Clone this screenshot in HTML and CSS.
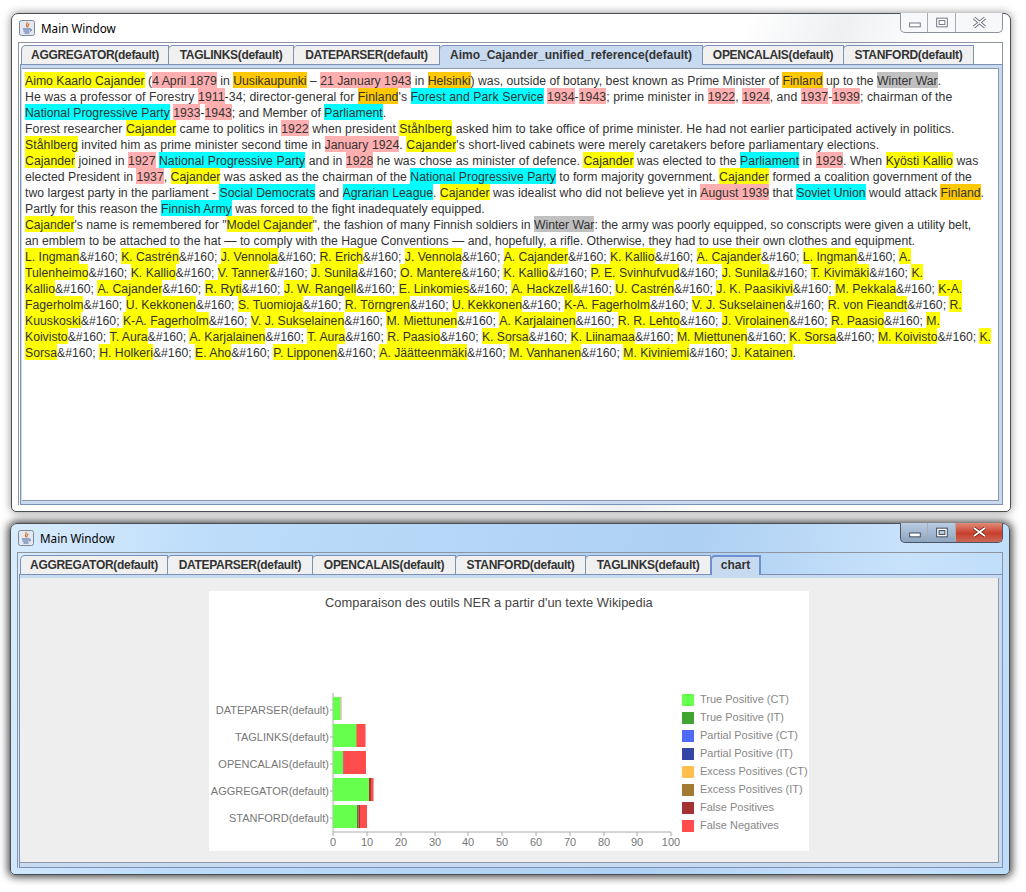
FILE: index.html
```html
<!DOCTYPE html>
<html lang="en">
<head>
<meta charset="utf-8">
<title>Main Window</title>
<link rel="stylesheet" href="styles.css">
</head>
<body>
<section class="win win-top">
  <header class="titlebar">
    <svg class="appicon" viewBox="0 0 16 16"><rect x=".5" y=".5" width="15" height="15" rx="2" fill="#e3e9f2" stroke="#7f8794"/><path d="M8 2c1 2-2 3 0 5M10 3.500c0 2-2 2-1 4" fill="none" stroke="#d8702a" stroke-width="1.200"/><path d="M4 9h7M4.500 11h6M5.500 13h5M11 9c2 0 2 2 0 2" fill="none" stroke="#46629a"/></svg>
    <span class="wintitle">Main Window</span>
    <div class="controls">
      <span class="ctl ctl-min"><svg viewBox="0 0 27 19"><rect x="9" y="10" width="11" height="4" fill="#fff" stroke="#6d7480"/></svg></span>
      <span class="ctl ctl-max"><svg viewBox="0 0 28 19"><rect x="9" y="5" width="11" height="9" fill="#fff" stroke="#6d7480"/><rect x="11.500" y="7.500" width="6" height="4" fill="none" stroke="#6d7480"/></svg></span>
      <span class="ctl ctl-close"><svg viewBox="0 0 46 19"><path d="M18 5l11 9M29 5l-11 9" stroke="#6d7480" stroke-width="3.400"/><path d="M18 5l11 9M29 5l-11 9" stroke="#fff" stroke-width="1.600"/></svg></span>
    </div>
  </header>
  <div class="tabpane">
    <nav class="tabs">
      <span class="tab caps w147">AGGREGATOR(default)</span>
      <span class="tab caps w125">TAGLINKS(default)</span>
      <span class="tab caps w146">DATEPARSER(default)</span>
      <span class="tab w263 active">Aimo_Cajander_unified_reference(default)</span>
      <span class="tab caps w141">OPENCALAIS(default)</span>
      <span class="tab caps w130">STANFORD(default)</span>
    </nav>
    <div class="tabbody-text">
      <div class="doc">
        <p class="ln"><i class="y">Aimo Kaarlo Cajander</i> (<i class="p">4 April 1879</i> in <i class="o">Uusikaupunki</i> – <i class="p">21 January 1943</i> in <i class="o">Helsinki</i>) was, outside of botany, best known as Prime Minister of <i class="o">Finland</i> up to the <i class="g">Winter War</i>.</p>
        <p class="ln wide3">He was a professor of Forestry <i class="p">1911</i>-34; director-general for <i class="o">Finland</i>'s <i class="c">Forest and Park Service</i> <i class="p">1934</i>-<i class="p">1943</i>; prime minister in <i class="p">1922</i>, <i class="p">1924</i>, and <i class="p">1937</i>-<i class="p">1939</i>; chairman of the</p>
        <p class="ln"><i class="c">National Progressive Party</i> <i class="p">1933</i>-<i class="p">1943</i>; and Member of <i class="c">Parliament</i>.</p>
        <p class="ln wide2">Forest researcher <i class="y">Cajander</i> came to politics in <i class="p">1922</i> when president <i class="y">Ståhlberg</i> asked him to take office of prime minister. He had not earlier participated actively in politics.</p>
        <p class="ln wide2"><i class="y">Ståhlberg</i> invited him as prime minister second time in <i class="p">January 1924</i>. <i class="y">Cajander</i>'s short-lived cabinets were merely caretakers before parliamentary elections.</p>
        <p class="ln wide2"><i class="y">Cajander</i> joined in <i class="p">1927</i> <i class="c">National Progressive Party</i> and in <i class="p">1928</i> he was chose as minister of defence. <i class="y">Cajander</i> was elected to the <i class="c">Parliament</i> in <i class="p">1929</i>. When <i class="y">Kyösti Kallio</i> was</p>
        <p class="ln wide1">elected President in <i class="p">1937</i>, <i class="y">Cajander</i> was asked as the chairman of the <i class="c">National Progressive Party</i> to form majority government. <i class="y">Cajander</i> formed a coalition government of the</p>
        <p class="ln">two largest party in the parliament - <i class="c">Social Democrats</i> and <i class="c">Agrarian League</i>. <i class="y">Cajander</i> was idealist who did not believe yet in <i class="p">August 1939</i> that <i class="c">Soviet Union</i> would attack <i class="o">Finland</i>.</p>
        <p class="ln">Partly for this reason the <i class="c">Finnish Army</i> was forced to the fight inadequately equipped.</p>
        <p class="ln tight"><i class="y">Cajander</i>'s name is remembered for "<i class="y">Model Cajander</i>", the fashion of many Finnish soldiers in <i class="g">Winter War</i>: the army was poorly equipped, so conscripts were given a utility belt,</p>
        <p class="ln">an emblem to be attached to the hat — to comply with the Hague Conventions — and, hopefully, a rifle. Otherwise, they had to use their own clothes and equipment.</p>
        <p class="ln tight"><i class="y">L. Ingman</i>&amp;#160; <i class="y">K. Castrén</i>&amp;#160; <i class="y">J. Vennola</i>&amp;#160; <i class="y">R. Erich</i>&amp;#160; <i class="y">J. Vennola</i>&amp;#160; <i class="y">A. Cajander</i>&amp;#160; <i class="y">K. Kallio</i>&amp;#160; <i class="y">A. Cajander</i>&amp;#160; <i class="y">L. Ingman</i>&amp;#160; <i class="y">A.</i></p>
        <p class="ln"><i class="y">Tulenheimo</i>&amp;#160; <i class="y">K. Kallio</i>&amp;#160; <i class="y">V. Tanner</i>&amp;#160; <i class="y">J. Sunila</i>&amp;#160; <i class="y">O. Mantere</i>&amp;#160; <i class="y">K. Kallio</i>&amp;#160; <i class="y">P. E. Svinhufvud</i>&amp;#160; <i class="y">J. Sunila</i>&amp;#160; <i class="y">T. Kivimäki</i>&amp;#160; <i class="y">K.</i></p>
        <p class="ln wide1"><i class="y">Kallio</i>&amp;#160; <i class="y">A. Cajander</i>&amp;#160; <i class="y">R. Ryti</i>&amp;#160; <i class="y">J. W. Rangell</i>&amp;#160; <i class="y">E. Linkomies</i>&amp;#160; <i class="y">A. Hackzell</i>&amp;#160; <i class="y">U. Castrén</i>&amp;#160; <i class="y">J. K. Paasikivi</i>&amp;#160; <i class="y">M. Pekkala</i>&amp;#160; <i class="y">K-A.</i></p>
        <p class="ln"><i class="y">Fagerholm</i>&amp;#160; <i class="y">U. Kekkonen</i>&amp;#160; <i class="y">S. Tuomioja</i>&amp;#160; <i class="y">R. Törngren</i>&amp;#160; <i class="y">U. Kekkonen</i>&amp;#160; <i class="y">K-A. Fagerholm</i>&amp;#160; <i class="y">V. J. Sukselainen</i>&amp;#160; <i class="y">R. von Fieandt</i>&amp;#160; <i class="y">R.</i></p>
        <p class="ln"><i class="y">Kuuskoski</i>&amp;#160; <i class="y">K-A. Fagerholm</i>&amp;#160; <i class="y">V. J. Sukselainen</i>&amp;#160; <i class="y">M. Miettunen</i>&amp;#160; <i class="y">A. Karjalainen</i>&amp;#160; <i class="y">R. R. Lehto</i>&amp;#160; <i class="y">J. Virolainen</i>&amp;#160; <i class="y">R. Paasio</i>&amp;#160; <i class="y">M.</i></p>
        <p class="ln tight"><i class="y">Koivisto</i>&amp;#160; <i class="y">T. Aura</i>&amp;#160; <i class="y">A. Karjalainen</i>&amp;#160; <i class="y">T. Aura</i>&amp;#160; <i class="y">R. Paasio</i>&amp;#160; <i class="y">K. Sorsa</i>&amp;#160; <i class="y">K. Liinamaa</i>&amp;#160; <i class="y">M. Miettunen</i>&amp;#160; <i class="y">K. Sorsa</i>&amp;#160; <i class="y">M. Koivisto</i>&amp;#160; <i class="y">K.</i></p>
        <p class="ln"><i class="y">Sorsa</i>&amp;#160; <i class="y">H. Holkeri</i>&amp;#160; <i class="y">E. Aho</i>&amp;#160; <i class="y">P. Lipponen</i>&amp;#160; <i class="y">A. Jäätteenmäki</i>&amp;#160; <i class="y">M. Vanhanen</i>&amp;#160; <i class="y">M. Kiviniemi</i>&amp;#160; <i class="y">J. Katainen</i>.</p>
      </div>
    </div>
  </div>
</section>

<section class="win win-bottom">
  <header class="titlebar">
    <svg class="appicon" viewBox="0 0 16 16"><rect x=".5" y=".5" width="15" height="15" rx="2" fill="#e3e9f2" stroke="#7f8794"/><path d="M8 2c1 2-2 3 0 5M10 3.500c0 2-2 2-1 4" fill="none" stroke="#d8702a" stroke-width="1.200"/><path d="M4 9h7M4.500 11h6M5.500 13h5M11 9c2 0 2 2 0 2" fill="none" stroke="#46629a"/></svg>
    <span class="wintitle">Main Window</span>
    <div class="controls">
      <span class="ctl ctl-min"><svg viewBox="0 0 27 19"><rect x="9" y="10" width="11" height="4" fill="#fff" stroke="#3b4656"/></svg></span>
      <span class="ctl ctl-max"><svg viewBox="0 0 28 19"><rect x="9" y="5" width="11" height="9" fill="#fff" stroke="#3b4656"/><rect x="11.500" y="7.500" width="6" height="4" fill="#b9cde4" stroke="#3b4656"/></svg></span>
      <span class="ctl ctl-close"><svg viewBox="0 0 46 19"><path d="M18 5l11 8M29 5l-11 8" stroke="#5b1d14" stroke-width="3.400"/><path d="M18 5l11 8M29 5l-11 8" stroke="#fff" stroke-width="1.800"/></svg></span>
    </div>
  </header>
  <div class="tabpane">
    <nav class="tabs">
      <span class="tab caps w147">AGGREGATOR(default)</span>
      <span class="tab caps w145">DATEPARSER(default)</span>
      <span class="tab caps w143">OPENCALAIS(default)</span>
      <span class="tab caps w130">STANFORD(default)</span>
      <span class="tab caps w125">TAGLINKS(default)</span>
      <span class="tab w50 active focus">chart</span>
    </nav>
    <div class="tabbody-chart">
      <div class="chartarea">
      <svg class="chart" viewBox="0 0 600 260" width="600" height="260">
        <text class="ct" x="116" y="16">Comparaison des outils NER a partir d'un texte Wikipedia</text>
        <g class="cat" text-anchor="end">
          <text x="120" y="123">DATEPARSER(default)</text>
          <text x="120" y="150">TAGLINKS(default)</text>
          <text x="120" y="177">OPENCALAIS(default)</text>
          <text x="120" y="204">AGGREGATOR(default)</text>
          <text x="120" y="231">STANFORD(default)</text>
        </g>
        <path d="M124 102V241H462M121 119h3M121 146h3M121 173h3M121 200h3M121 227h3M124 241v4M158 241v4M192 241v4M226 241v4M259 241v4M293 241v4M327 241v4M361 241v4M395 241v4M428 241v4M462 241v4" fill="none" stroke="#aaa"/>
        <rect x="124" y="106" width="7.500" height="23" fill="#66ff4d"/><rect x="131.500" y="106" width="1" height="23" fill="#d9a48a"/>
        <rect x="124" y="133" width="23" height="23" fill="#66ff4d"/><rect x="147" y="133" width="1" height="23" fill="#c29a4a"/><rect x="148" y="133" width="8.500" height="23" fill="#ff4d4d"/>
        <rect x="124" y="160" width="9.500" height="23" fill="#66ff4d"/><rect x="133.500" y="160" width="1.500" height="23" fill="#a08a52"/><rect x="135" y="160" width="22" height="23" fill="#ff4d4d"/>
        <rect x="124" y="187" width="36" height="23" fill="#66ff4d"/><rect x="160" y="187" width="2" height="23" fill="#a33333"/><rect x="162" y="187" width="2" height="23" fill="#ff4d4d"/><rect x="164" y="187" width="1" height="23" fill="#ff9f9f"/>
        <rect x="124" y="214" width="24" height="23" fill="#66ff4d"/><rect x="148" y="214" width="1.500" height="23" fill="#6d6d3c"/><rect x="149.500" y="214" width="1.500" height="23" fill="#a33333"/><rect x="151" y="214" width="7" height="23" fill="#ff4d4d"/>
        <g class="tick" text-anchor="middle">
          <text x="124" y="255">0</text><text x="158" y="255">10</text><text x="192" y="255">20</text><text x="226" y="255">30</text><text x="259" y="255">40</text><text x="293" y="255">50</text><text x="327" y="255">60</text><text x="361" y="255">70</text><text x="395" y="255">80</text><text x="428" y="255">90</text><text x="462" y="255">100</text>
        </g>
        <g class="leg">
          <rect x="473" y="103" width="12" height="12" fill="#66ff4d"/><text x="491" y="112">True Positive (CT)</text>
          <rect x="473" y="121" width="12" height="12" fill="#41a332"/><text x="491" y="130">True Positive (IT)</text>
          <rect x="473" y="139" width="12" height="12" fill="#4d6cff"/><text x="491" y="148">Partial Positive (CT)</text>
          <rect x="473" y="157" width="12" height="12" fill="#3245a3"/><text x="491" y="166">Partial Positive (IT)</text>
          <rect x="473" y="175" width="12" height="12" fill="#ffbf4d"/><text x="491" y="184">Excess Positives (CT)</text>
          <rect x="473" y="193" width="12" height="12" fill="#a37a32"/><text x="491" y="202">Excess Positives (IT)</text>
          <rect x="473" y="211" width="12" height="12" fill="#a33232"/><text x="491" y="220">False Positives</text>
          <rect x="473" y="229" width="12" height="12" fill="#ff4d4d"/><text x="491" y="238">False Negatives</text>
        </g>
      </svg>
      </div>
    </div>
  </div>
</section>
</body>
</html>
```
FILE: styles.css
```css
html, body { margin: 0; padding: 0; }
body { position: relative; width: 1026px; height: 892px; overflow: hidden; background: #fff; font-family: "Liberation Sans", Arial, sans-serif; }
.win { position: absolute; box-sizing: border-box; display: flex; flex-direction: column; border: 1px solid #4a4f55; border-radius: 7px 7px 5px 5px; }
.win-top { left: 11px; top: 13px; width: 1000px; height: 499px; padding: 0 7px 6px 6px; background: linear-gradient(115deg, #fff 60%, #eef0f2 68%, #fff 76%); box-shadow: 0 0 8px rgba(0,0,0,.45); }
.win-bottom { left: 10px; top: 523px; width: 1000px; height: 352px; padding: 0 6px 6px 6px; background: linear-gradient(100deg, #d9ecfd 0, #bcdcfa 20%, #aed0f2 65%, #c8e2fb 85%, #bcdcfa 100%); box-shadow: 0 0 9px 2px rgba(0,0,0,.75); }
.titlebar { position: relative; flex: none; display: flex; align-items: center; height: 28px; gap: 6px; padding-left: 1px; }
.appicon { width: 16px; height: 16px; flex: none; }
.wintitle { font: 11.700px "Noto Sans", "Open Sans", sans-serif; color: #000; }
.controls { position: absolute; right: 0; top: -1px; display: flex; height: 20px; box-sizing: border-box; border: 1px solid #8c929b; border-top: 0; border-radius: 0 0 5px 5px; overflow: hidden; background: #f7f8fa; }
.ctl { display: block; height: 19px; box-sizing: border-box; }
.ctl svg { display: block; width: 100%; height: 100%; }
.ctl-min { width: 27px; border-right: 1px solid #a8adb5; }
.ctl-max { width: 28px; border-right: 1px solid #a8adb5; }
.ctl-close { width: 46px; }
.win-bottom .controls { background: linear-gradient(#b9cde4, #8ea5bf); border-color: #4a5666; }
.win-bottom .ctl-close { background: linear-gradient(#e08a78, #c8402c 55%, #c96a58); }
.tabpane { flex: 1; display: flex; flex-direction: column; min-height: 0; border: 1px solid #8e959e; border-bottom: 0; padding: 2px 0 0 1px; box-sizing: border-box; }
.tabs { display: flex; flex: none; height: 19px; align-items: stretch; padding-left: 1px; }
.tab { box-sizing: border-box; display: block; border: 1px solid #7c90b8; border-bottom: 0; border-radius: 5px 0 0 0; background: #f0f0f0; font: bold 12px/18px "Liberation Sans", Arial, sans-serif; color: #333; text-align: center; white-space: nowrap; }
.tab + .tab { margin-left: -1px; }
.caps { letter-spacing: -.3px; }
.tab.active { position: relative; z-index: 1; margin-bottom: -1px; background: #c8daf0; }
.tab.focus { border: 2px solid #6e8fd0; border-bottom: 0; line-height: 17px; }
.w147 { width: 148px; } .w125 { width: 126px; } .w146 { width: 147px; } .w263 { width: 264px; } .w141 { width: 142px; } .w130 { width: 131px; } .w145 { width: 146px; } .w143 { width: 144px; } .w50 { width: 51px; }
.tabbody-text { flex: 1; min-height: 0; display: flex; margin-right: -1px; border: 1px solid #7c90b8; background: #c8daf0; padding: 3px 3px 3px 1px; }
.doc { flex: 1; background: #fff; border: 1px solid #8d98a8; border-left: 0; padding: 3px; overflow: hidden; }
.ln { margin: 0; height: 16px; font: 12.240px/18px "Liberation Sans", Arial, sans-serif; color: #333; white-space: nowrap; }
.ln i { font-style: normal; display: inline-block; height: 16px; }
.wide1 { letter-spacing: .025px; }
.wide2 { letter-spacing: .055px; }
.wide3 { letter-spacing: .075px; }
.tight { letter-spacing: -.028px; }
.y { background: #ff0; } .o { background: #ffc800; } .p { background: #ffafaf; } .c { background: #0ff; } .g { background: #c0c0c0; }
.tabbody-chart { flex: 1; min-height: 0; display: flex; margin-right: -1px; border: 1px solid #7c90b8; background: #c8daf0; padding: 3px 3px 4px 0; }
.chartarea { flex: 1; background: #eee; border: 1px solid #8d98a8; border-width: 0 1px 1px 0; padding: 13px 0 0 189px; }
.chart { display: block; background: #fff; }
.ct { font: 12.900px "Liberation Sans", Arial, sans-serif; fill: #444; }
.cat text { font: 11px "Liberation Sans", Arial, sans-serif; fill: #777; }
.tick text { font: 11px "Liberation Sans", Arial, sans-serif; fill: #777; }
.leg text { font: 11px "Liberation Sans", Arial, sans-serif; fill: #888; }
```
